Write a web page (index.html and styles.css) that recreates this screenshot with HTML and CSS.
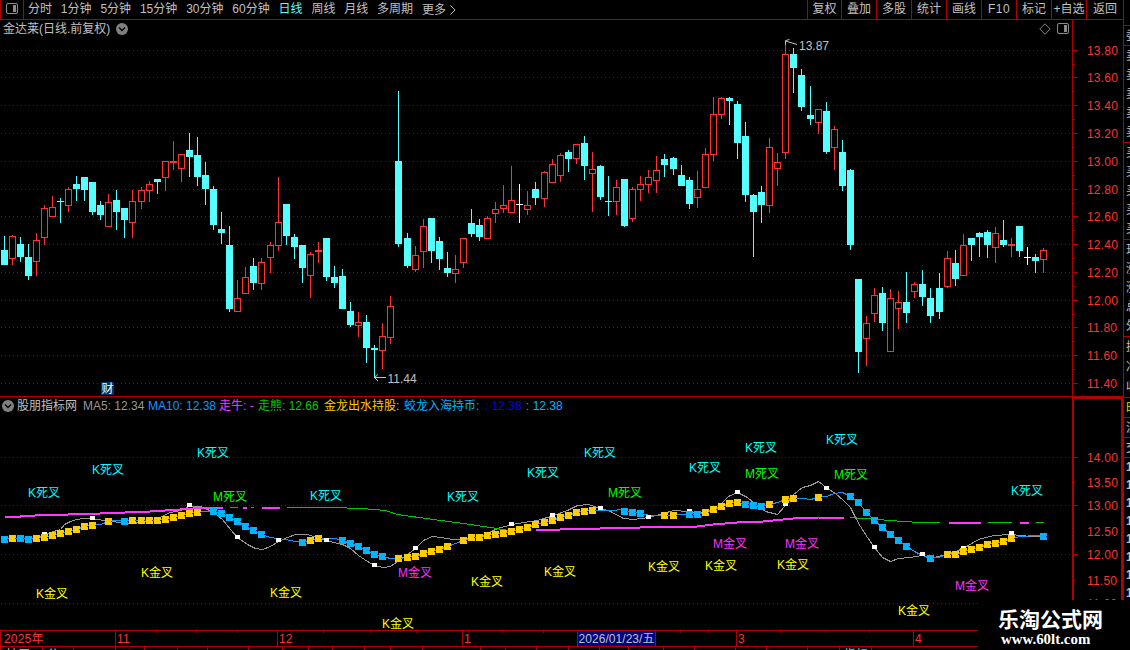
FILE: index.html
```html
<!DOCTYPE html>
<html lang="zh-CN">
<head>
<meta charset="utf-8">
<title>金达莱 日线</title>
<link rel="stylesheet" href="styles.css">
</head>
<body>
<div class="terminal">
  <div class="workspace">
    <nav class="toolbar">
      <span class="layout-btn">
        <svg width="14" height="12" viewBox="0 0 14 12"><rect x="1.5" y=".5" width="11" height="10" rx="1.5" fill="none" stroke="#8c8c8c"/><rect x="8" y="2" width="3" height="7" fill="#8c8c8c"/></svg>
      </span>
      <ul class="periods">
        <li>分时</li><li>1分钟</li><li>5分钟</li><li>15分钟</li><li>30分钟</li><li>60分钟</li><li class="active">日线</li><li>周线</li><li>月线</li><li>多周期</li>
        <li class="more">更多<svg width="6" height="10" viewBox="0 0 6 10"><path d="M.5 .5 5 5 .5 9.5" fill="none" stroke="#c0c0c0"/></svg></li>
      </ul>
      <ul class="actions">
        <li>复权</li><li>叠加</li><li>多股</li><li>统计</li><li>画线</li><li class="latin">F10</li><li>标记</li><li>+自选</li><li class="last">返回</li>
      </ul>
    </nav>

    <section class="panel price-panel">
      <svg class="plot" id="price" width="1123" height="377" viewBox="0 20 1123 377"></svg>
      <header class="panel-head">
        <span>金达莱(日线.前复权)</span>
        <svg class="chev" width="12" height="12" viewBox="0 0 12 12"><circle cx="6" cy="6" r="6" fill="#808080"/><path d="M3 4.5 6 7.5 9 4.5" fill="none" stroke="#000" stroke-width="1.3"/></svg>
        <span class="panel-tools">
          <svg width="12" height="12" viewBox="0 0 12 12"><path d="M6 .8 11.2 6 6 11.2 .8 6Z" fill="none" stroke="#808080"/></svg>
          <svg width="13" height="12" viewBox="0 0 13 12"><rect x=".5" y=".5" width="11" height="10" rx="1.5" fill="none" stroke="#8c8c8c"/><rect x="7" y="2" width="3" height="7" fill="#8c8c8c"/></svg>
        </span>
      </header>
    </section>

    <section class="panel indicator-panel">
      <svg class="plot" id="indicator" width="1123" height="233" viewBox="0 397 1123 233"></svg>
      <header class="panel-head legend">
        <svg class="chev" width="12" height="12" viewBox="0 0 12 12"><circle cx="6" cy="6" r="6" fill="#808080"/><path d="M3 4.5 6 7.5 9 4.5" fill="none" stroke="#000" stroke-width="1.3"/></svg>
        <span class="name">股朋指标网</span>
        <span class="ma5">MA5: 12.34</span>
        <span class="ma10">MA10: 12.38</span>
        <span class="bull">走牛: -</span>
        <span class="bear">走熊: 12.66</span>
        <span class="hold">金龙出水持股:</span>
        <span class="cash">蛟龙入海持币:</span>
        <span class="deep">: 12.38</span>
        <span class="cash2">: 12.38</span>
      </header>
    </section>

    <svg class="time-axis" id="time" width="1123" height="20" viewBox="0 630 1123 20"></svg>
  </div>

  <aside class="quote-strip">
    <div class="group committee"><span>委</span></div>
    <div class="group five"><span>卖</span><span>卖</span><span>卖</span><span>卖</span><span>卖</span></div>
    <div class="group five"><span>买</span><span>买</span><span>买</span><span>买</span><span>买</span></div>
    <div class="group now"><span>现</span><span>涨</span><span>涨</span><span>总</span><span>外</span></div>
    <div class="group fund"><span>换</span><span>净</span><span>收</span></div>
    <div class="group one tabs"><span>时</span></div>
    <div class="group one"><span>流</span></div>
    <div class="group one"><span>交</span></div>
    <div class="group ticks"><span>1</span><span>1</span><span>1</span><span>1</span><span>1</span><span>1</span><span>1</span><span>1</span></div>
  </aside>

  <div class="watermark"><b>乐淘公式网</b><i>www.60lt.com</i></div>
</div>
<script src="chart.js"></script>
</body>
</html>
```

FILE: styles.css
```css
* { box-sizing: border-box; }
body {
  margin: 0;
  background: #000;
  color: #c0c0c0;
  font: 12px/18px "Liberation Sans", "Noto Sans CJK SC", sans-serif;
}
ul { list-style: none; margin: 0; padding: 0; }
svg { display: block; }

.terminal {
  position: relative;
  display: grid;
  grid-template-columns: 1123px 7px;
  width: 1130px;
  height: 650px;
  overflow: hidden;
}
.workspace { display: grid; grid-template-rows: 20px 377px 233px 20px; }

.toolbar {
  display: flex;
  height: 20px;
  border-bottom: 1px solid #b00000;
  white-space: nowrap;
}
.layout-btn {
  width: 24px;
  padding: 3px 0 0 4px;
  border: solid #b00000;
  border-width: 0 1px;
}
.periods { display: flex; gap: 8.85px; padding-left: 4px; }
.periods .active { color: #54ffff; }
.periods .more { display: flex; align-items: center; gap: 4px; }
.actions { display: flex; margin-left: auto; }
.actions li {
  width: 35px;
  border-left: 1px solid #b00000;
  text-align: center;
}
.actions li:first-child { width: 34px; }
.actions .latin { letter-spacing: .5px; }
.actions .last { width: 37px; }

.panel { display: grid; }
.panel > * { grid-area: 1 / 1; }
.panel-head {
  display: flex;
  align-items: center;
  height: 18px;
  padding-left: 3px;
  white-space: nowrap;
}
.price-panel .chev { margin-left: 6px; }
.panel-tools { display: flex; gap: 6px; margin-left: auto; padding-right: 53px; }
.legend { padding-left: 2px; height: 17px; }
.legend span { flex: none; }
.legend .chev { margin-right: 3px; }
.legend .name { width: 66px; }
.legend .ma5 { width: 65px; color: #989898; }
.legend .ma10 { width: 71px; color: #1496ff; }
.legend .bull { width: 39px; color: #ff38ff; }
.legend .bear { width: 66px; color: #00c800; }
.legend .hold { width: 80px; color: #ffc800; }
.legend .cash { width: 81px; color: #00b4ff; }
.legend .deep { width: 41px; color: #0000ff; }
.legend .cash2 { color: #00b4ff; }

.cyan { fill: #00ffff; }
.green { fill: #00ff00; }
.pink { fill: #ff32ff; }
.yellow { fill: #ffff00; }
.axis-label { fill: #ff3232; letter-spacing: .2px; }
.note { fill: #c0c0c0; }

.quote-strip {
  border-left: 1px solid #b00000;
  overflow: hidden;
  padding-top: 25px;
}
.group {
  display: flex;
  flex-direction: column;
  justify-content: space-around;
  padding-left: 2px;
  width: 24px;
  border-top: 1px solid #b00000;
  line-height: 14px;
}
.committee { height: 20px; }
.five { height: 97px; }
.now { height: 97px; }
.fund { height: 61px; }
.one { height: 20px; }
.tabs { color: #e6dc00; }
.ticks { height: 145px; font-weight: bold; }

.watermark {
  position: absolute;
  left: 978px;
  top: 600px;
  width: 152px;
  height: 50px;
  background: #000;
  color: #fff;
  display: flex;
  flex-direction: column;
  padding: 6px 0 0 20px;
}
.watermark b { font: bold 21px/25px "Noto Sans CJK SC", sans-serif; white-space: nowrap; }
.watermark i { font: bold 14.9px/16px "Liberation Serif", serif; padding-left: 3px; }
```

FILE: chart.js
```js
// Candle: [x, high, body top, body bottom, low, kind]  d = falling, u = rising, w = flat
const candles = `4 236 250 265 265 d;12 235 236 259 265 u;20 237 244 257 262 d;28 244 257 276 280 d;36 233 240 262 276 u;44 205 208 238 245 u;52 196 207 217 217 u;60 198 201 202 223 d;68 187 189 206 212 u;76 176 184 189 201 d;84 177 177 190 201 d;92 182 182 212 215 d;100 201 205 215 220 d;108 194 202 227 227 u;116 190 200 212 230 d;124 208 208 220 238 d;132 190 201 223 238 u;141 187 190 202 209 u;149 181 184 191 202 u;157 179 179 182 194 d;165 161 161 178 191 u;173 141 161 163 170 u;181 154 154 169 182 u;189 133 150 157 177 d;197 137 155 177 186 d;205 162 175 189 205 d;213 186 189 225 230 d;221 212 229 233 244 d;229 226 245 309 312 d;237 280 298 312 312 u;245 267 277 294 294 u;253 258 266 283 290 d;261 258 262 284 290 u;270 242 245 258 273 u;278 177 222 246 251 u;286 204 204 236 245 d;294 234 237 247 259 d;302 245 245 268 283 d;310 252 254 276 298 u;318 242 250 252 263 u;326 238 238 277 281 d;334 266 277 283 288 d;342 269 276 309 309 d;350 302 311 325 327 d;358 312 322 326 337 u;366 315 322 348 363 d;374 345 348 350 378 d;382 323 336 351 369 u;390 296 306 338 344 u;398 91 161 244 247 d;407 233 238 266 268 d;415 246 255 270 272 u;423 219 226 252 268 u;431 218 218 251 263 d;439 237 241 259 270 d;447 252 268 273 277 d;455 255 269 274 283 u;463 238 238 263 268 u;471 209 223 234 237 d;479 219 225 237 241 d;487 216 218 239 239 u;495 202 209 214 223 u;503 185 205 209 213 u;511 166 200 213 213 u;519 184 204 205 223 w;527 191 205 210 215 u;535 182 189 198 205 d;544 171 172 199 207 u;552 159 164 183 183 u;560 153 155 176 182 u;568 150 152 159 172 d;576 144 144 159 164 u;584 136 143 166 180 d;592 152 169 174 212 u;600 165 166 197 200 d;608 176 201 202 216 d;616 180 187 202 215 u;624 179 179 226 227 d;632 187 189 219 222 u;640 176 184 190 201 u;648 170 177 185 193 u;656 156 170 181 193 u;664 154 159 165 177 d;673 157 158 169 175 d;681 165 175 186 186 d;689 177 180 204 209 d;697 171 189 198 208 u;705 148 154 188 188 u;713 97 114 155 161 u;721 97 98 115 119 u;729 97 98 101 125 d;737 101 104 143 159 d;745 122 136 195 202 d;753 194 195 212 257 d;761 186 192 205 223 d;769 138 147 206 213 u;777 153 162 169 186 u;785 42 54 153 159 u;793 48 54 68 93 d;801 69 75 107 111 d;810 86 115 119 125 d;818 109 109 123 134 u;826 102 111 152 154 d;834 126 129 148 170 u;842 140 152 186 191 d;850 169 170 245 250 d;858 279 279 352 373 d;866 316 323 339 366 u;874 288 295 314 322 u;882 287 293 323 331 d;890 289 298 352 352 u;898 291 302 309 329 u;906 272 302 313 323 d;914 282 284 292 298 u;922 270 284 297 306 d;930 288 298 316 323 d;939 273 288 312 319 d;947 251 258 287 288 u;955 250 263 279 286 d;963 234 245 276 276 u;971 238 238 245 261 d;979 232 233 237 257 d;987 230 232 245 258 d;995 227 233 248 263 u;1003 220 240 245 247 d;1011 238 244 246 257 u;1019 226 226 251 257 d;1027 247 257 258 265 w;1035 254 257 261 273 d;1043 248 250 260 273 u`
  .split(';').map(s => s.split(' '));

const RED = '#b00000', UP = '#ff3232', DOWN = '#54ffff';
const rect = (x, y, w, h, fill) => `<rect x="${x}" y="${y}" width="${w}" height="${h}" fill="${fill}"/>`;
const label = (x, cy, cls, s) => `<text x="${x}" y="${cy + 4.5}" class="${cls}">${s}</text>`;
const dots = y => `<path d="M1 ${y + .5}H1072" stroke="#a00000" stroke-dasharray="1 3"/>`;
const line = (pts, color, w = 1) => `<polyline points="${pts}" fill="none" stroke="${color}" stroke-width="${w}" transform="translate(.5 .5)"/>`;
const crisp = s => `<g shape-rendering="crispEdges">${s}</g>`;

function drawPrice() {
  const rows = [50, 77, 105, 133, 161, 189, 216, 244, 272, 300, 327, 355, 383];
  let g = rows.map(dots).join('');
  for (const [cx, hi, top, bot, lo, kind] of candles) {
    const x = +cx, t = +top, b = +bot, h = +hi, l = +lo;
    if (kind === 'u') {
      g += rect(x, h, 1, t - h, UP) + rect(x, b, 1, l - b, UP);
      g += b - t <= 2 ? rect(x - 3, t, 7, b - t, UP)
        : `<rect x="${x - 2.5}" y="${t + .5}" width="6" height="${b - t - 1}" fill="#000" stroke="${UP}"/>`;
    } else {
      const c = kind === 'w' ? '#fff' : DOWN;
      g += rect(x, h, 1, l - h, c) + rect(x - 3, t, 7, b - t, c);
    }
  }
  g += rect(1072, 20, 1, 377, RED) + rect(0, 396, 1123, 1, RED);
  rows.forEach((y, i) => {
    g += rect(1073, y, 5, 1, RED);
    if (i < rows.length - 1) g += rect(1073, Math.round((y + rows[i + 1]) / 2), 2, 1, RED);
  });
  g += rect(101, 382, 13, 13, '#003468');
  let t = rows.map((y, i) => label(1087, y, 'axis-label', (13.8 - i * .2).toFixed(2))).join('');
  t += label(799, 45.5, 'note', '13.87') + label(387.5, 378.5, 'note', '11.44');
  t += '<text x="101.5" y="393" fill="#fff">财</text>';
  t += '<path d="M374 377.5H386M378 374.5 374.5 377.5 378 381M797 44.5 785.5 41M789.5 39.5 785.5 40.5V45" fill="none" stroke="#c0c0c0"/>';
  document.getElementById('price').innerHTML = crisp(g) + t;
}

const ma5 = '36,539 44,534 50,532 60,529 64,524 70,521 76,519 84,518 92,518 103,520 120,522 133,523 157,519 163,515 170,512 180,510 189,506 200,506 207,509 213,512 222,519 230,529 237,537 247,544 255,548 262,549 270,546 278,541 287,537 295,534 307,534 320,538 333,542 342,544 350,548 358,555 367,561 374,565 383,567 390,566 397,561 407,554 415,548 423,540 432,536 440,537 453,539 467,539 483,535 497,528 512,524 523,522 537,520 553,515 567,510 577,505 588,504 600,508 610,511 623,518 633,519 648,517 663,513 673,510 687,511 697,512 707,512 717,507 728,496 737,492 747,497 755,504 765,511 777,514 785,505 793,494 802,487 810,485 818,481 827,488 835,493 843,500 850,507 855,517 860,526 867,537 874,547 882,557 890,561 898,558 910,557 922,555 933,557 947,554 963,548 978,539 993,535 1011,534 1030,536 1043,536';

// Square marks on the slow line: h = holding shares, c = holding cash, - = line only
const marks = `4 539 c;12 538 h;20 538 c;28 539 c;36 538 h;44 537 h;52 535 h;60 533 h;68 531 h;76 529 h;84 526 h;92 525 h;100 524 -;108 521 h;116 520 -;124 521 c;132 520 h;141 520 h;149 520 h;157 520 h;165 519 h;173 517 h;181 515 h;189 513 h;197 512 h;205 511 -;213 511 c;221 513 c;229 517 c;237 521 c;245 526 c;253 530 c;261 534 c;270 537 -;285 539 -;295 541 -;302 542 c;310 540 h;318 538 h;335 538 -;342 540 c;350 543 c;358 546 c;366 550 c;374 554 c;382 556 c;390 558 -;398 558 h;407 557 h;415 556 h;423 553 h;431 551 h;439 549 h;447 546 h;455 543 -;463 540 h;471 537 h;479 537 h;487 535 h;495 534 h;503 533 h;511 531 h;519 529 h;527 527 h;535 524 h;544 522 h;552 520 h;560 517 h;568 515 h;576 512 h;584 511 h;592 510 h;600 510 -;613 510 -;620 509 -;624 511 c;632 512 c;640 513 c;650 515 -;664 515 h;673 515 h;681 514 -;689 514 c;697 514 c;705 512 h;713 509 h;721 506 h;729 503 h;737 502 h;745 504 c;753 505 c;761 506 c;769 504 h;777 502 -;785 499 h;793 498 h;802 498 -;810 499 -;818 497 h;826 496 -;834 493 -;842 492 -;850 496 c;858 502 c;866 512 c;874 520 c;882 527 c;890 534 c;898 540 c;906 546 c;914 551 -;922 555 -;930 558 c;938 557 -;947 554 h;955 554 h;963 551 h;971 549 h;979 547 h;987 544 h;995 543 h;1003 541 h;1011 538 h;1020 536 -;1035 535 -;1043 536 c`
  .split(';').map(s => s.split(' '));

const turns = [[44, 534], [92, 518], [189, 505], [237, 537], [278, 540], [326, 540], [374, 565], [415, 548], [511, 524], [552, 515], [600, 508], [648, 517], [689, 511], [737, 492], [785, 504], [826, 488], [874, 547], [922, 554], [963, 548], [1011, 533]];

const tags = {
  cyan: ['K死叉', [29, 492], [93, 469], [198, 452], [311, 495], [448, 496], [528, 472], [585, 452], [690, 467], [746, 447], [827, 439], [1012, 490]],
  green: ['M死叉', [214, 496], [609, 492], [746, 473], [835, 474]],
  pink: ['M金叉', [399, 572], [714, 543], [786, 543], [956, 585]],
  yellow: ['K金叉', [37, 593], [142, 572], [271, 592], [383, 623], [472, 581], [545, 571], [649, 566], [706, 565], [778, 564], [899, 610]]
};

function drawIndicator() {
  const major = { 457: '14.00', 505: '13.00', 554: '12.00', 603: '11.00' };
  const minor = { 482: '13.50', 531: '12.50', 580: '11.50' };
  let g = Object.keys(major).map(y => dots(+y)).join('');
  g += line(ma5, '#989898');
  g += line('286,507 330,507 362,508 385,510 397,514 433,519 463,523 490,527 508,530', '#00c800');
  g += line('229,507 237,507', '#00c800') + line('250,507 253,507', '#00c800');
  g += line('850,517 877,519 903,521 920,522 939,522', '#00c800');
  g += line('987,522 1011,522', '#00c800') + line('1035,522 1043,522', '#00c800');
  const pink = ['4,516 20,516 35,515 68,514 100,513 150,511 165,510 180,509 205,507 222,507', '242,507 246,507', '261,507 279,507', '536,530 560,529 600,528 640,527 697,526 713,524 737,522 763,521 793,518 818,517 843,517', '948,522 980,522', '1019,522 1028,522'];
  g += pink.map(p => line(p, '#ff38ff', 2)).join('');
  g += line(marks.map(m => m[0] + ',' + m[1]).join(' '), '#1496ff');
  g += turns.map(([x, y]) => rect(x - 2, y - 2, 5, 4, '#fff')).join('');
  for (const [x, y, k] of marks) {
    if (k === '-') continue;
    g += rect(x - 3, y - 3, 7, 7, k === 'h' ? '#ffcc00' : '#00b4ff');
    g += rect(+x + 3, +y, 1, 1, k === 'h' ? '#503c00' : '#0000c8');
  }
  g += rect(1072, 397, 2, 233, RED) + rect(1072, 397, 51, 2, RED) + rect(1121, 397, 2, 233, RED);
  let t = '';
  for (const y in major) { g += rect(1074, y, 4, 1, RED); t += label(1087, +y + .5, 'axis-label', major[y]); }
  for (const y in minor) { g += rect(1074, y, 1, 1, RED); t += label(1087, +y + .5, 'axis-label', minor[y]); }
  for (const cls in tags) {
    const [s, ...at] = tags[cls];
    t += at.map(([x, y]) => label(x - 1, y, cls, s)).join('');
  }
  document.getElementById('indicator').innerHTML = crisp(g) + t;
}

function drawTime() {
  let g = rect(0, 630, 1123, 1, RED) + rect(0, 646, 1123, 1, RED) + rect(0, 630, 1, 17, RED);
  g += [115, 277, 462, 736, 913].map(x => rect(x, 630, 1, 17, RED)).join('');
  g += [156, 196, 237, 323, 370, 416, 502, 543, 680, 708, 780, 825, 869].map(x => rect(x, 631, 1, 2, RED)).join('');
  g += [0, 42, 73, 115, 144, 177, 207, 248, 282, 308, 332, 364, 390, 422, 480, 505, 536, 568, 599, 628, 663, 694, 735, 766, 807, 839, 871].map(x => rect(x, 647, 1, 3, RED)).join('');
  g += rect(577, 631, 79, 15, '#000080') + rect(577, 631, 1, 15, RED) + rect(655, 631, 1, 15, RED);
  const names = [[4, '2025年'], [117, '11'], [279, '12'], [464, '1'], [738, '3'], [915, '4']];
  let t = names.map(([x, s]) => label(x, 638.5, 'axis-label', s)).join('');
  t += '<text x="578.5" y="642.5" class="note" textLength="76">2026/01/23/五</text>';
  t += '<text x="6" y="659" class="note">扩展</text><text x="47" y="659" class="note">分</text><text x="844" y="659" class="cyan">指标</text>';
  document.getElementById('time').innerHTML = crisp(g) + t;
}

drawPrice();
drawIndicator();
drawTime();
```
